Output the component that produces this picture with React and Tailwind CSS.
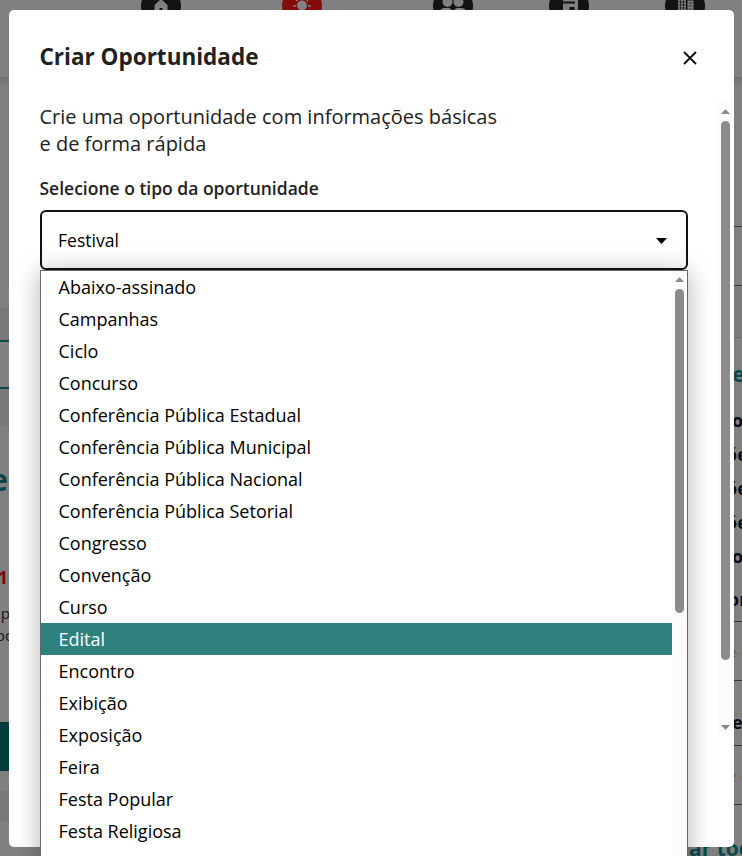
import React from "react";

const options = [
  "Abaixo-assinado", "Campanhas", "Ciclo", "Concurso",
  "Conferência Pública Estadual", "Conferência Pública Municipal",
  "Conferência Pública Nacional", "Conferência Pública Setorial",
  "Congresso", "Convenção", "Curso", "Edital", "Encontro", "Exibição",
  "Exposição", "Feira", "Festa Popular", "Festa Religiosa",
];

function Arrow({ down = false }) {
  return (
    <svg className="block h-[5px] w-[9px] shrink-0" viewBox="0 0 9 5" fill="#8b8b8b">
      <path d={down ? "M0 0h9L4.5 5z" : "M0 5h9L4.5 0z"} />
    </svg>
  );
}

function NavIcon({ red = false, children }) {
  return (
    <svg className={red ? "h-10 w-10 shrink-0 text-[#870a0a]" : "h-10 w-10 shrink-0 text-[#121214]"} viewBox="0 0 40 40">
      <circle cx="20" cy="20" r="20" fill="currentColor" />
      {children}
    </svg>
  );
}

function Header() {
  return (
    <header className="h-[77px] shrink-0 overflow-hidden bg-[#808082]">
      <div className="-mt-[14px] flex pl-[141px]">
        <NavIcon>
          <path d="M20 13l-6.500 6v9h13v-9zM18.500 22h3v4h-3z" fill="#808082" fillRule="evenodd" />
        </NavIcon>
        <div className="ml-[101px] flex">
          <NavIcon red>
            <circle cx="20" cy="19.500" r="5" fill="#808082" />
            <path d="M11 20h3M26 20h3M13.500 13l2 2M26.500 13l-2 2" stroke="#808082" strokeWidth="1.500" />
          </NavIcon>
        </div>
        <div className="ml-[111px] flex">
          <NavIcon>
            <g fill="#808082">
              <circle cx="14.500" cy="16" r="5" />
              <circle cx="25.500" cy="16" r="5" />
              <path d="M7 26q0-4 5-4h3q4 0 4 4zM21 26q0-4 4-4h3q5 0 5 4z" />
            </g>
          </NavIcon>
        </div>
        <div className="ml-[76px] flex">
          <NavIcon>
            <path d="M14 10h15v17H14zM14 15.500h12v2H14zM20.500 21h5v5h-5z" fill="#808082" fillRule="evenodd" />
          </NavIcon>
        </div>
        <div className="ml-[76px] flex">
          <NavIcon>
            <path d="M13 9h8v17h-8zM22.500 14.500h6V26h-6z" fill="#808082" />
            <path d="M13 16h8M13 19h8M13 22h8M15.500 11v15M18.500 11v15M23.500 17h4M23.500 20h4M23.500 23h4" stroke="#121214" strokeWidth=".7" />
          </NavIcon>
        </div>
      </div>
    </header>
  );
}

function LeftEdge() {
  return (
    <div className="flex w-[9px] flex-col overflow-hidden whitespace-nowrap">
      <div className="h-[231px]" />
      <div className="h-[118px] bg-[#787878] pt-8">
        <div className="h-[49px] border-y-2 border-[#0b4747] bg-[#808080]" />
      </div>
      <div className="flex h-[296px] flex-col items-end pr-px pt-[34px]">
        <div className="text-[30px] font-bold leading-[40px] text-[#0b4747]">de</div>
        <div className="mt-[66px] text-[18px] font-bold leading-[22px] text-[#750b0b]">1</div>
        <div className="-mr-[2px] mt-[14px] text-[15px] leading-[22px] text-[#17171a]">p</div>
        <div className="-mr-[6px] text-[15px] leading-[22px] text-[#17171a]">po</div>
      </div>
      <div className="h-[49px] bg-[#043b3d]" />
      <div className="h-5" />
      <div className="h-[30px] bg-[#787878]" />
    </div>
  );
}

function RightEdge() {
  return (
    <div className="flex w-[62px] flex-col overflow-hidden whitespace-nowrap pl-[52px] text-[18px] font-bold leading-[34px] text-[#0c0c10]">
      <div className="-ml-[52px] h-[149px] shrink-0" />
      <div className="-ml-[52px] h-[60px] shrink-0 border-y border-[#3a3a3c]" />
      <div className="-ml-[52px] h-[52px] shrink-0 border-b border-[#707070] bg-[#7b7b7b]" />
      <div className="mt-[18px] h-[34px] shrink-0 text-[22px] text-[#0a494c]">e</div>
      <div className="mt-[13px] shrink-0">
        <div>o</div>
        <div className="-ml-[6px]">õe</div>
        <div className="-ml-[6px]">õe</div>
        <div className="-ml-[6px]">õe</div>
        <div>o</div>
      </div>
      <div className="-ml-1 mt-[9px] h-[39px] shrink-0">or</div>
      <div className="h-[60px] shrink-0 border-y border-[#343436] pt-3 font-normal text-[#64483a]"><span className="-ml-[6px]">e e</span></div>
      <div className="h-[64px] shrink-0 pt-6">e</div>
      <div className="h-[60px] shrink-0 border-y border-[#343436] pt-3 font-normal text-[#64483a]"><span className="-ml-[6px]">e e</span></div>
      <div className="-ml-[43px] mt-[26px] shrink-0 text-[21px] text-[#0a494c]">ar todos</div>
    </div>
  );
}

function Dropdown() {
  return (
    <div className="absolute left-[40px] top-[270px] flex h-[620px] w-[648px] border border-[#686868] bg-white shadow-[0_2px_24px_rgba(0,0,0,0.3)]">
      <ul className="min-w-0 flex-1 text-[18px] leading-8 text-black">
        {options.map((option) => (
          <li key={option} className={option === "Edital" ? "h-8 bg-[#2f817e] pl-[17.5px] text-white" : "h-8 pl-[17.5px]"}>
            {option}
          </li>
        ))}
      </ul>
      <div className="flex w-[15px] flex-col items-center bg-[#fbfbfb] pt-[6px]">
        <Arrow />
        <div className="mt-[7px] h-[324px] w-[9px] rounded-full bg-[#8b8b8b]" />
      </div>
    </div>
  );
}

function Modal() {
  return (
    <section className="absolute left-[9px] top-[10px] flex h-[837px] w-[725px] flex-col rounded-[5px] bg-white text-[#212121]">
      <div className="flex h-[92px] shrink-0 items-start justify-between pl-[30.5px] pr-[37px] pt-[31px]">
        <h1 className="text-[22.5px] font-bold leading-8">Criar Oportunidade</h1>
        <svg className="mt-[10px] h-[14px] w-[14px]" viewBox="0 0 14 14" fill="none" stroke="#080808" strokeWidth="1.800">
          <path d="M1 1l12 12M13 1L1 13" />
        </svg>
      </div>
      <div className="flex h-[634px] shrink-0">
        <div className="flex-1 pl-[30.5px]">
          <p className="pt-px text-[20px] leading-[27px]">
            Crie uma oportunidade com informações básicas<br />e de forma rápida
          </p>
          <label className="mt-[19px] block text-[17.5px] font-semibold leading-6">Selecione o tipo da oportunidade</label>
          <div className="ml-[0.5px] mt-[10px] flex h-[60px] w-[648px] items-center justify-between rounded-[6px] border-2 border-[#111] pl-4 pr-[19px] text-[17.6px] text-black">
            <span>Festival</span>
            <svg className="mt-px h-[6px] w-[11px]" viewBox="0 0 11 6"><path d="M0 0h11L5.500 6z" /></svg>
          </div>
        </div>
        <div className="flex w-[17px] flex-col items-center bg-[#fcfcfc] pt-[7px]">
          <Arrow />
          <div className="mt-[7px] h-[539px] w-[9px] rounded-full bg-[#8b8b8b]" />
          <div className="mt-[65px]"><Arrow down /></div>
        </div>
      </div>
    </section>
  );
}

export default function App() {
  return (
    <main className="relative flex h-[856px] w-[742px] flex-col overflow-hidden bg-[#808080] font-['Open_Sans','Noto_Sans',sans-serif]">
      <Header />
      <div className="flex min-h-0 flex-1 justify-between bg-linear-to-b from-[#707070] via-[#7d7d7d] via-[8px] to-[#808080] to-[12px]">
        <LeftEdge />
        <RightEdge />
      </div>
      <Modal />
      <Dropdown />
    </main>
  );
}
